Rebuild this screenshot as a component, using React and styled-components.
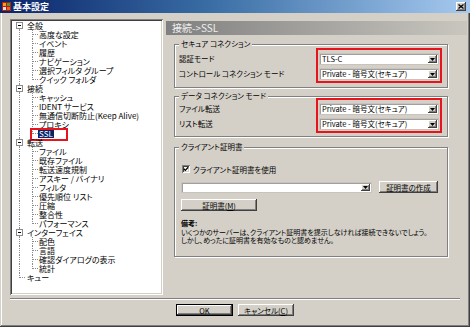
import React from 'react';
import styled, { createGlobalStyle, css } from 'styled-components';

const FACE = '#d4d0c8';

const Global = createGlobalStyle`
  html, body { margin: 0; padding: 0; background: ${FACE}; }
  body {
    font-family: "Noto Sans CJK JP", "Noto Sans", sans-serif;
    font-feature-settings: "palt";
    color: #000;
  }
  #root { width: 470px; height: 327px; overflow: hidden; }
`;

const raised = css`
  box-shadow: inset -1px -1px #404040, inset 1px 1px #fff, inset -2px -2px #808080, inset 2px 2px ${FACE};
`;

const sunken = css`
  box-shadow: inset 1px 1px #808080, inset -1px -1px #fff, inset 2px 2px #404040, inset -2px -2px ${FACE};
`;

const Window = styled.div`
  width: 470px;
  height: 327px;
  box-sizing: border-box;
  background: ${FACE};
  display: flex;
  flex-direction: column;
  box-shadow: inset -1px -1px #404040, inset 1px 0 ${FACE}, inset -2px -2px #808080, inset 2px 0 #fff;
`;

const TitleBar = styled.div`
  height: 13px;
  flex: none;
  display: flex;
  align-items: center;
  gap: 2px;
  padding: 0 4px 0 2px;
  background: linear-gradient(to right, #0a246a, #3a6ea5 45%, #a6caf0);
`;

const TitleText = styled.div`
  flex: 1;
  color: #fff;
  font-weight: bold;
  font-size: 9px;
  line-height: 13px;
  white-space: nowrap;
`;

const CloseBtn = styled.div`
  width: 10px;
  height: 9px;
  background: ${FACE};
  ${raised};
  display: flex;
  align-items: center;
  justify-content: center;
`;

const Body = styled.div`
  flex: 1;
  display: flex;
  flex-direction: column;
  padding: 6px 3px 0 10px;
`;

const Main = styled.div`
  display: flex;
  gap: 3px;
  height: 276px;
`;

const TreePanel = styled.div`
  width: 153px;
  flex: none;
  box-sizing: border-box;
  background: #fff;
  padding: 2px 0 0 2px;
  ${sunken};
  overflow: hidden;
`;

const vDots = 'repeating-linear-gradient(to bottom, #8c8c8c 0 1px, transparent 1px 2px)';
const hDots = 'repeating-linear-gradient(to right, #8c8c8c 0 1px, transparent 1px 2px)';

const TreeRow = styled.div`
  display: flex;
  align-items: center;
  height: 9px;
`;

const Guide = styled.div`
  width: 14px;
  height: 9px;
  flex: none;
  display: flex;
  align-items: center;
  background: ${p =>
    p.$kind === 'first'
      ? `${vDots} 7px 4px / 1px 5px no-repeat`
      : p.$kind === 'last'
      ? `${vDots} 7px 0 / 1px 5px no-repeat, ${hDots} 8px 4px / 6px 1px no-repeat`
      : `${vDots} 7px 0 / 1px 100% no-repeat`};
`;

const Branch = styled.div`
  width: 12px;
  height: 9px;
  flex: none;
  background: ${p =>
    p.$last
      ? `${vDots} 6px 0 / 1px 5px no-repeat, ${hDots} 7px 4px / 5px 1px no-repeat`
      : `${vDots} 6px 0 / 1px 100% no-repeat, ${hDots} 7px 4px / 5px 1px no-repeat`};
`;

const Expander = styled.div`
  width: 7px;
  height: 7px;
  margin-left: 4px;
  box-sizing: border-box;
  border: 1px solid #8c8c8c;
  background: #fff;
  display: flex;
  align-items: center;
  justify-content: center;
  &::after {
    content: '';
    width: 3px;
    height: 1px;
    background: #000;
  }
`;

const NodeLabel = styled.div`
  position: relative;
  font-size: 8px;
  line-height: 9px;
  height: 9px;
  padding: 0 1px;
  white-space: nowrap;
  ${p => p.$selected && css`
    background: #0a246a;
    color: #fff;
  `}
`;

/* red annotation rectangle drawn over the selected tree item */
const MarkBox = styled.span`
  position: absolute;
  left: -8px;
  top: -1px;
  width: 38px;
  height: 13px;
  box-sizing: border-box;
  border: 2px solid #e8141c;
  pointer-events: none;
`;

const RightCol = styled.div`
  flex: 1;
  display: flex;
  flex-direction: column;
  min-width: 0;
`;

const Header = styled.div`
  margin-top: 2px;
  height: 14px;
  padding-left: 6px;
  background: linear-gradient(to right, #808080, #c9c6bf);
  color: #eeeeee;
  font-size: 10px;
  line-height: 14px;
  white-space: nowrap;
`;

const Groups = styled.div`
  width: 274px;
  margin-left: 8px;
  display: flex;
  flex-direction: column;
`;

const Group = styled.div`
  margin-top: ${p => p.$gap}px;
  border: 1px solid #808080;
  box-shadow: inset 1px 1px #fff, 1px 1px #fff;
  display: flex;
  flex-direction: column;
`;

const Caption = styled.div`
  align-self: flex-start;
  margin: -5px 0 0 4px;
  padding: 0 2px;
  background: ${FACE};
  font-size: 7.5px;
  line-height: 8px;
  height: 8px;
  white-space: nowrap;
`;

const ConnRow = styled.div`
  display: flex;
  justify-content: space-between;
  align-items: flex-start;
  margin-top: ${p => (p.$tight ? -2 : 0)}px;
  padding: 0 5px ${p => p.$bottom}px 4px;
`;

const LabelCol = styled.div`
  display: flex;
  flex-direction: column;
  gap: 3px;
  padding-top: 5px;
`;

const FieldLabel = styled.div`
  height: 12px;
  line-height: 12px;
  font-size: 7.5px;
  white-space: nowrap;
`;

const RedBox = styled.div`
  width: 126px;
  box-sizing: border-box;
  border: 2px solid #e8141c;
  padding: 3px 1px 1px;
  display: flex;
  flex-direction: column;
  gap: 3px;
`;

const ComboBox = styled.div`
  width: ${p => (p.$w ? `${p.$w}px` : '100%')};
  height: ${p => p.$h || 12}px;
  box-sizing: border-box;
  flex: none;
  display: flex;
  align-items: center;
  background: #fff;
  box-shadow: inset 1px 1px #a0a0a0, inset -1px -1px #fff;
  border: 1px solid #c8c4bc;
`;

const ComboText = styled.div`
  flex: 1;
  padding-left: 2px;
  font-size: 7.5px;
  line-height: 10px;
  white-space: nowrap;
  overflow: hidden;
`;

const DropBtn = styled.div`
  width: 9px;
  align-self: stretch;
  margin: 1px 1px 1px 0;
  background: ${FACE};
  ${raised};
  display: flex;
  align-items: center;
  justify-content: center;
`;

const CertBody = styled.div`
  display: flex;
  flex-direction: column;
  align-items: flex-start;
  padding: 0 6px 11px 6px;
`;

const CheckRow = styled.div`
  margin-top: 13px;
  margin-left: 1px;
  display: flex;
  align-items: center;
  gap: 3px;
  height: 10px;
  font-size: 7.5px;
  white-space: nowrap;
`;

const CheckBox = styled.div`
  width: 8px;
  height: 8px;
  box-sizing: border-box;
  background: #fff;
  ${sunken};
  display: flex;
  align-items: center;
  justify-content: center;
`;

const CertRow = styled.div`
  margin-top: 7px;
  display: flex;
  align-items: center;
  gap: 7px;
`;

const PushButton = styled.div`
  width: ${p => p.$w}px;
  height: 12px;
  box-sizing: border-box;
  flex: none;
  margin-top: ${p => p.$mt || 0}px;
  background: ${FACE};
  ${raised};
  display: flex;
  align-items: center;
  justify-content: center;
  font-size: 7.5px;
  white-space: nowrap;
  ${p => p.$default && css`
    border: 1px solid #000;
  `}
`;

const Note = styled.div`
  margin-top: 8px;
  font-size: 7px;
  line-height: 8.5px;
  white-space: nowrap;
`;

const NoteTitle = styled.div`
  font-weight: bold;
`;

const Separator = styled.div`
  margin: 3px 7px 0 0;
  border-top: 1px solid #808080;
  border-bottom: 1px solid #fff;
`;

const ButtonRow = styled.div`
  margin-top: 4px;
  padding-right: 7px;
  display: flex;
  justify-content: center;
  gap: 5px;
`;

const tree = [
  { label: '全般', children: ['高度な設定', 'イベント', '履歴', 'ナビゲーション', '選択フィルタ グループ', 'クイック フォルダ'] },
  { label: '接続', children: ['キャッシュ', 'IDENT サービス', '無通信切断防止(Keep Alive)', 'プロキシ', 'SSL'] },
  { label: '転送', children: ['ファイル', '既存ファイル', '転送速度規制', 'アスキー / バイナリ', 'フィルタ', '優先順位 リスト', '圧縮', '整合性', 'パフォーマンス'] },
  { label: 'インターフェイス', children: ['配色', '言語', '確認ダイアログの表示', '統計'] },
  { label: 'キュー' },
];

const AppIcon = () => (
  <svg width="9" height="9" viewBox="0 0 9 9">
    <rect x="0" y="0" width="9" height="9" fill="#b02010" />
    <rect x="1" y="1" width="3" height="3" fill="#f0a020" />
    <rect x="5" y="1" width="3" height="3" fill="#40a040" />
    <rect x="1" y="5" width="3" height="3" fill="#e0e0e0" />
    <rect x="5" y="5" width="3" height="3" fill="#f06020" />
  </svg>
);

const CloseX = () => (
  <svg width="6" height="5" viewBox="0 0 6 5">
    <path d="M0.5 0.5 L5.5 4.5 M5.5 0.5 L0.5 4.5" stroke="#000" strokeWidth="1.3" />
  </svg>
);

const DownArrow = () => (
  <svg width="5" height="3" viewBox="0 0 5 3">
    <path d="M0 0 H5 L2.5 3 Z" fill="#000" />
  </svg>
);

const CheckMark = () => (
  <svg width="6" height="6" viewBox="0 0 6 6">
    <path d="M0.8 2.8 L2.3 4.4 L5.2 1.2" stroke="#000" strokeWidth="1.3" fill="none" />
  </svg>
);

const Combo = ({ value, w, h }) => (
  <ComboBox $w={w} $h={h}>
    <ComboText>{value}</ComboText>
    <DropBtn>
      <DownArrow />
    </DropBtn>
  </ComboBox>
);

function Tree() {
  const rows = [];
  tree.forEach((node, i) => {
    const kind = i === 0 ? 'first' : i === tree.length - 1 ? 'last' : 'pass';
    rows.push(
      <TreeRow key={node.label}>
        <Guide $kind={kind}>{node.children && <Expander />}</Guide>
        <NodeLabel>{node.label}</NodeLabel>
      </TreeRow>
    );
    (node.children || []).forEach((c, j) => {
      const selected = c === 'SSL';
      rows.push(
        <TreeRow key={node.label + c}>
          <Guide $kind="pass" />
          <Branch $last={j === node.children.length - 1} />
          <NodeLabel $selected={selected}>
            {c}
            {selected && <MarkBox />}
          </NodeLabel>
        </TreeRow>
      );
    });
  });
  return <TreePanel>{rows}</TreePanel>;
}

export default function App() {
  return (
    <>
      <Global />
      <Window>
        <TitleBar>
          <AppIcon />
          <TitleText>基本設定</TitleText>
          <CloseBtn>
            <CloseX />
          </CloseBtn>
        </TitleBar>
        <Body>
          <Main>
            <Tree />
            <RightCol>
              <Header>接続-&gt;SSL</Header>
              <Groups>
                <Group $gap={9}>
                  <Caption>セキュア コネクション</Caption>
                  <ConnRow $bottom={4}>
                    <LabelCol>
                      <FieldLabel>認証モード</FieldLabel>
                      <FieldLabel>コントロール コネクション モード</FieldLabel>
                    </LabelCol>
                    <RedBox>
                      <Combo value="TLS-C" />
                      <Combo value="Private - 暗号文(セキュア)" />
                    </RedBox>
                  </ConnRow>
                </Group>
                <Group $gap={8}>
                  <Caption>データ コネクション モード</Caption>
                  <ConnRow $tight $bottom={3}>
                    <LabelCol>
                      <FieldLabel>ファイル転送</FieldLabel>
                      <FieldLabel>リスト転送</FieldLabel>
                    </LabelCol>
                    <RedBox>
                      <Combo value="Private - 暗号文(セキュア)" />
                      <Combo value="Private - 暗号文(セキュア)" />
                    </RedBox>
                  </ConnRow>
                </Group>
                <Group $gap={10}>
                  <Caption>クライアント証明書</Caption>
                  <CertBody>
                    <CheckRow>
                      <CheckBox>
                        <CheckMark />
                      </CheckBox>
                      クライアント証明書を使用
                    </CheckRow>
                    <CertRow>
                      <Combo value="" w={191} h={11} />
                      <PushButton $w={59}>証明書の作成</PushButton>
                    </CertRow>
                    <PushButton $w={76} $mt={6}>
                      証明書(<u>M</u>)
                    </PushButton>
                    <Note>
                      <NoteTitle>備考:</NoteTitle>
                      <div>いくつかのサーバーは、クライアント証明書を提示しなければ接続できないでしょう。</div>
                      <div>しかし、めったに証明書を有効なものと認めません。</div>
                    </Note>
                  </CertBody>
                </Group>
              </Groups>
            </RightCol>
          </Main>
          <Separator />
          <ButtonRow>
            <PushButton $w={57} $default>
              <u>O</u>K
            </PushButton>
            <PushButton $w={56}>
              キャンセル(<u>C</u>)
            </PushButton>
          </ButtonRow>
        </Body>
      </Window>
    </>
  );
}
